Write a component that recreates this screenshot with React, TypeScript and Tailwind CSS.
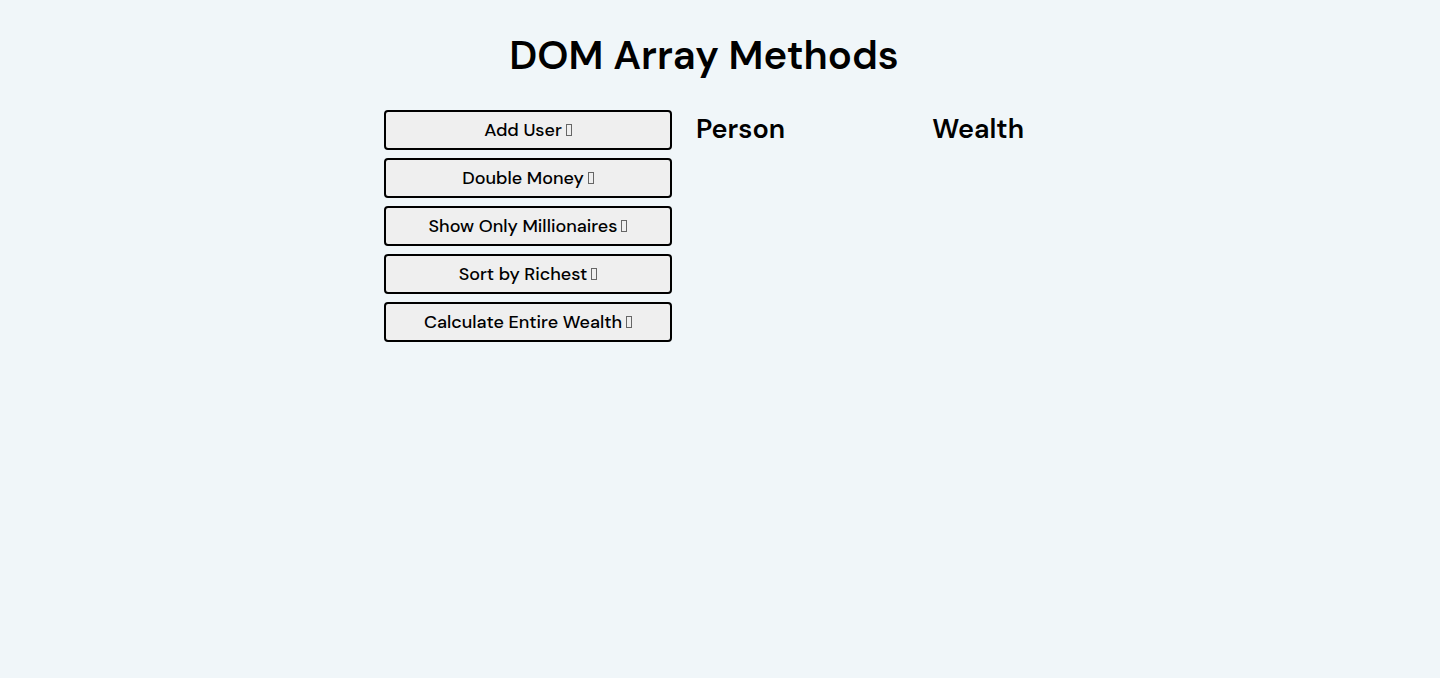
const actions: string[] = [
  'Add User',
  'Double Money',
  'Show Only Millionaires',
  'Sort by Richest',
  'Calculate Entire Wealth',
];

function ButtonMark() {
  return (
    <svg aria-hidden="true" viewBox="0 0 6 12" className="h-3 w-1.5" fill="none" stroke="#666666">
      <rect x="0.5" y="0.5" width="5" height="11" />
    </svg>
  );
}

export default function App() {
  return (
    <div className="flex min-h-screen flex-col items-center bg-[#f0f6f9] font-['DM_Sans',Inter,sans-serif] text-black">
      <h1 className="mt-8 mr-8 text-[40px] leading-[46px] font-semibold">DOM Array Methods</h1>
      <div className="mt-8 mr-8 flex w-full max-w-[640px] gap-6">
        <aside className="flex w-72 shrink-0 flex-col gap-2">
          {actions.map((label) => (
            <button
              key={label}
              type="button"
              className="flex h-10 w-full items-center justify-center gap-1 rounded border-2 border-black bg-[#efefef] text-[18px] leading-6 font-medium"
            >
              {label}
              <ButtonMark />
            </button>
          ))}
        </aside>
        <main className="flex grow justify-between">
          <h2 className="text-[27px] leading-[38px] font-semibold">Person</h2>
          <h2 className="text-[27px] leading-[38px] font-semibold">Wealth</h2>
        </main>
      </div>
    </div>
  );
}
